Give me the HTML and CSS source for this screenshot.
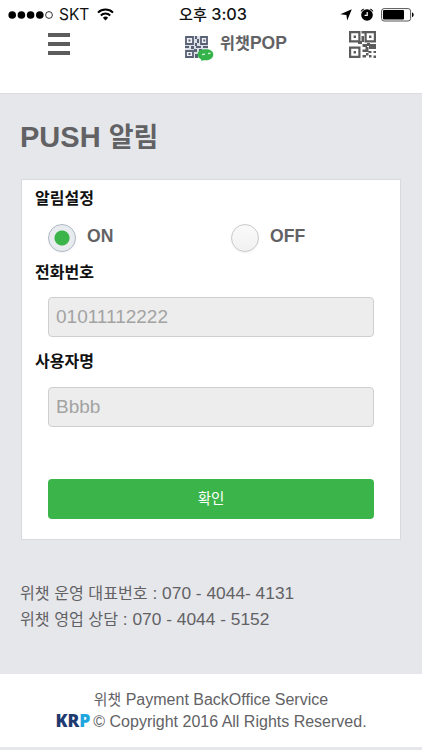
FILE: index.html
```html
<!DOCTYPE html>
<html lang="ko">
<head>
  <meta charset="utf-8">
  <meta name="viewport" content="width=device-width, initial-scale=1">
  <title>위챗POP</title>
  <link rel="stylesheet" href="styles.css">
</head>
<body>

  <header class="header">
    <div class="status">
      <div class="carrier">
        <svg class="signal" width="46" height="10" viewBox="0 0 46 10">
          <circle cx="4.2" cy="5" r="3.8"/>
          <circle cx="13.4" cy="5" r="3.8"/>
          <circle cx="22.6" cy="5" r="3.8"/>
          <circle cx="31.8" cy="5" r="3.8"/>
          <circle cx="41" cy="5" r="3.4" fill="#fff" stroke="#000" stroke-width=".8"/>
        </svg>
        <span>SKT</span>
        <svg class="wifi" width="17" height="13" viewBox="0 0 17 13" fill="none" stroke="#000" stroke-width="2">
          <path d="M1 4.6a10.8 10.8 0 0 1 15 0M3.8 7.5a6.8 6.8 0 0 1 9.4 0"/>
          <path d="M8.5 12.4 5.9 9.7a3.8 3.8 0 0 1 5.2 0z" fill="#000" stroke="none"/>
        </svg>
      </div>
      <div class="clock"><span class="ko">오후</span> 3:03</div>
      <div class="indicators">
        <svg width="12" height="12" viewBox="0 0 12 12"><path d="M11.8.2 7.2 11.6 6.4 6 .3 5.2z"/></svg>
        <svg class="alarm" width="14" height="14" viewBox="0 0 14 14">
          <path d="M.8 4.1A3 3 0 0 1 4.3.9zM13.2 4.1A3 3 0 0 0 9.7.9z"/>
          <circle cx="7" cy="7" r="5.8"/>
          <path d="M7.2 4v3.4H4.6" fill="none" stroke="#fff" stroke-width="1.2"/>
        </svg>
        <svg class="battery" width="34" height="14" viewBox="0 0 34 14">
          <rect x=".6" y=".6" width="29" height="12.4" rx="2.5" fill="#fff" stroke="#555"/>
          <rect x="2" y="2" width="21" height="9.6" rx="1"/>
          <path d="M31 4.5c2.2.5 2.2 4.2 0 4.7z"/>
        </svg>
      </div>
    </div>

    <nav class="navbar">
      <a class="menu" href="#" aria-label="메뉴"><i></i><i></i><i></i></a>
      <a class="brand" href="#">
        <svg width="31" height="28" viewBox="0 0 31 28">
          <rect x="1" y="1" width="23" height="22" fill="#dcdfe7"/>
          <path d="M2 2h7v7H2zM17 2h6v7h-6zM2 16h7v6H2z" fill="#eff1f6" stroke="#596174" stroke-width="1.8"/>
          <path d="M4.5 4.5h2v2h-2zM19.3 4.5h2v2h-2zM4.5 18h2v2h-2zM11 1h2v3h-2zM13 4h2v4h-2zM11 8h2v3h-2zM1 11h4v2H1zM7 11h3v3H7zM12 11h5v2h-5zM19 11h5v2h-5zM10 14h3v3h-3zM15 14h3v2h-3zM11 19h3v4h-3z" fill="#596174"/>
          <path d="M14 21.200c-1.600-4 2-7.200 6.700-7 4.900-.4 8.800 1.700 8.600 5.300 0 4-4.500 6.300-9 5.700l-3.300.5.2-1.500c-1.600-.7-2.700-1.600-3.200-3z" fill="#35b34b"/>
          <path d="M18 19.700l3-.6M24 18.600l2.500-.5" stroke="#d8f4dd" stroke-width="1.300"/>
        </svg>
        <span><span class="ko">위챗</span>POP</span>
      </a>
      <a class="qr" href="#" aria-label="QR">
        <svg width="27" height="27" viewBox="0 0 27 27" fill="#5c5c5c">
          <path d="M1.100 1.100h9.300v9.300H1.100zM16.600 1.100h9.300v9.300h-9.300zM1.100 16.600h9.300v9.300H1.100z" fill="none" stroke="#5c5c5c" stroke-width="2.200"/>
          <path d="M4.600 4.600h2.400V7H4.600zM20 4.600h2.400V7H20zM4.600 20H7v2.400H4.600zM12.500 0H17v2.500h-4.500zM12.500 5H15v6h-2.500zM9 10h4v3h5v3h-4.500v-3H9zM20 13h7v5h-7zM18 12h3v3h-3zM13.500 18.500h3v2.500h-3zM16.500 16h3v5h-3zM19.500 20h3v2h-3zM24.500 20H27v2h-2.500zM13.500 24H17v2.500h-3.500zM17 22h2.500v2.500H17zM20 24h2.500v2.500H20zM24.500 24.500H27V27h-2.500z"/>
        </svg>
      </a>
    </nav>
  </header>

  <main class="content">
    <h1>PUSH <span class="ko">알림</span></h1>

    <form class="card">
      <h2>알림설정</h2>
      <div class="radios">
        <label><input type="radio" name="push" value="on" checked><span>ON</span></label>
        <label><input type="radio" name="push" value="off"><span>OFF</span></label>
      </div>
      <h2>전화번호</h2>
      <input class="field" type="text" value="01011112222" disabled>
      <h2>사용자명</h2>
      <input class="field" type="text" value="Bbbb" disabled>
      <button class="submit" type="button">확인</button>
    </form>

    <div class="contact">
      <p><span class="ko">위챗 운영 대표번호</span> : 070 - 4044- 4131</p>
      <p><span class="ko">위챗 영업 상담</span> : 070 - 4044 - 5152</p>
    </div>
  </main>

  <footer class="footer">
    <p class="service"><span class="ko">위챗</span> Payment BackOffice Service</p>
    <p class="copy"><b class="krp">KR<em>P</em></b>© Copyright 2016 All Rights Reserved.</p>
  </footer>

</body>
</html>
```
FILE: styles.css
```css
* {
  box-sizing: border-box;
}

body {
  margin: 0;
  height: 750px;
  overflow: hidden;
  background: #e6e7eb;
  color: #626265;
  font-family: "Liberation Sans", "Noto Sans CJK KR", sans-serif;
}

h1, h2, p {
  margin: 0;
}

a {
  color: inherit;
  text-decoration: none;
}

svg {
  display: block;
}

.ko {
  font-size: .93em;
}

/* header */
.header {
  height: 94px;
  background: #fff;
  border-bottom: 1px solid #dddde1;
}

.status {
  display: grid;
  grid-template-columns: 1fr 80px 1fr;
  align-items: center;
  height: 28px;
  padding: 0 7px 0 8px;
  color: #111;
  font-family: Inter, "Noto Sans CJK KR", sans-serif;
  font-size: 16px;
}

.carrier,
.indicators {
  display: flex;
  align-items: center;
}

.carrier span {
  margin-left: 5px;
  font-size: 15.5px;
}

.wifi {
  margin-left: 8px;
}

.clock {
  padding-left: 3px;
  font-weight: 500;
  font-size: 16.3px;
  line-height: 28px;
  text-align: center;
  white-space: nowrap;
}

.indicators {
  justify-content: flex-end;
}

.alarm {
  margin: 0 7px 0 8px;
}

.navbar {
  display: flex;
  height: 36px;
}

.menu {
  width: 22px;
  margin: 5px 0 0 48px;
}

.menu i {
  display: block;
  height: 4px;
  margin-bottom: 5px;
  background: #5c5c5c;
}

.brand {
  display: flex;
  width: 104px;
  margin: 7px 0 0 114px;
  font-size: 17.5px;
  font-weight: bold;
  white-space: nowrap;
}

.brand > span {
  margin-left: 5px;
  line-height: 17px;
}

.qr {
  margin: 3px 0 0 61px;
}

/* content */
.content {
  height: 580px;
  padding: 22px 21px 0;
}

h1 {
  height: 63px;
  margin-left: -1px;
  font-size: 29px;
  line-height: 42px;
}

.card {
  height: 361px;
  padding: 7px 26px 0;
  background: #fff;
  border: 1px solid #d9dade;
}

h2 {
  margin-left: -13px;
  color: #111;
  font-size: 16px;
  line-height: 24px;
}

.radios {
  display: flex;
  height: 50px;
  padding-top: 13px;
}

.radios label {
  display: flex;
  flex: none;
  width: 183px;
  font-size: 17.6px;
  font-weight: bold;
}

.radios span {
  margin-left: 11px;
  line-height: 24px;
}

.radios input {
  appearance: none;
  width: 28px;
  height: 28px;
  margin: 0;
  border: 1px solid #c9c9cb;
  border-radius: 50%;
  background: linear-gradient(#fafafa, #f1f1f1);
  box-shadow: 0 1px 2px rgba(0, 0, 0, .06);
}

.radios input:checked {
  border-color: #acb8c4;
  background: radial-gradient(circle, #3bb54a 7px, #e9ecef 8px);
}

.field {
  display: block;
  width: 326px;
  height: 40px;
  margin: 12px 0 13px;
  padding: 0 7px;
  border: 1px solid #cfcfcf;
  border-radius: 4px;
  background: #ededed;
  color: #a3a3a3;
  font-family: inherit;
  font-size: 19px;
}

.field + h2 {
  margin-bottom: 13px;
}

.submit {
  display: block;
  width: 326px;
  height: 40px;
  margin-top: 52px;
  padding: 0 0 3px;
  border: 0;
  border-radius: 4px;
  background: #3bb54a;
  color: #fff;
  font-family: inherit;
  font-size: 14.5px;
}

.contact {
  margin: 40px 0 0 -1px;
  font-size: 17.35px;
  line-height: 26px;
  white-space: nowrap;
}

/* footer */
.footer {
  height: 73px;
  padding-top: 15px;
  background: #fff;
  font-size: 16px;
  line-height: 22px;
  text-align: center;
  white-space: nowrap;
}

.krp {
  margin-right: 3px;
  color: #1f3a70;
  font-family: "Open Sans", sans-serif;
  font-size: 17.5px;
  font-weight: 800;
  line-height: 1;
}

.krp em {
  color: #1ea6dd;
  font-style: normal;
}
```
